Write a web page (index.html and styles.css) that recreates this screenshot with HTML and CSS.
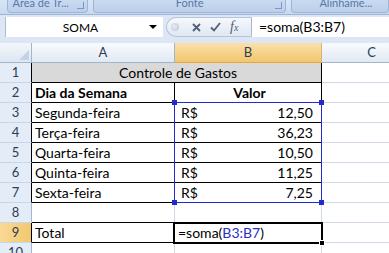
FILE: index.html
```html
<!DOCTYPE html>
<html lang="pt">
<head>
<meta charset="utf-8">
<title>Controle de Gastos</title>
<link rel="stylesheet" href="styles.css">
</head>
<body>
<div class="ribbon">
  <div class="grp g1"><span class="glabel">Área de Tr...</span><i class="launch"></i></div>
  <div class="grp g2"><span class="glabel">Fonte</span><i class="launch"></i></div>
  <div class="grp g3"><span class="glabel">Alinhame...</span></div>
</div>
<div class="fbar">
  <div class="namebox"><span class="nm">SOMA</span><span class="dd"></span></div>
  <div class="btns">
    <span class="dot"></span>
    <svg class="ico" width="9" height="9" viewBox="0 0 9 9"><path d="M1 1L8 8M8 1L1 8" stroke="#4e5f76" stroke-width="1.8" fill="none"/></svg>
    <svg class="ico" width="11" height="10" viewBox="0 0 11 10"><path d="M1 5.5L4 8.5L10 1" stroke="#4e5f76" stroke-width="1.8" fill="none"/></svg>
    <span class="fx">f<small>x</small></span>
  </div>
  <div class="formula">=soma(B3:B7)</div>
</div>
<div class="sheet">
  <div class="corner"><svg width="10" height="10" viewBox="0 0 10 10"><path d="M10 0L10 10L0 10Z" fill="#c2d2e8"/></svg></div>
  <div class="ch">A</div>
  <div class="ch sel">B</div>
  <div class="ch">C</div>

  <div class="rh bk">1</div>
  <div class="c title bb br">Controle de Gastos</div>
  <div class="c"></div>

  <div class="rh bk">2</div>
  <div class="c b bb br">Dia da Semana</div>
  <div class="c b ctr bb br">Valor</div>
  <div class="c"></div>

  <div class="rh bk">3</div>
  <div class="c bb br">Segunda-feira</div>
  <div class="c acc bb br"><span>R$</span><span>12,50</span></div>
  <div class="c"></div>

  <div class="rh bk">4</div>
  <div class="c bb br">Terça-feira</div>
  <div class="c acc bb br"><span>R$</span><span>36,23</span></div>
  <div class="c"></div>

  <div class="rh bk">5</div>
  <div class="c bb br">Quarta-feira</div>
  <div class="c acc bb br"><span>R$</span><span>10,50</span></div>
  <div class="c"></div>

  <div class="rh bk">6</div>
  <div class="c bb br">Quinta-feira</div>
  <div class="c acc bb br"><span>R$</span><span>11,25</span></div>
  <div class="c"></div>

  <div class="rh bk">7</div>
  <div class="c bb br">Sexta-feira</div>
  <div class="c acc bb br"><span>R$</span><span>7,25</span></div>
  <div class="c"></div>

  <div class="rh">8</div>
  <div class="c bb"></div>
  <div class="c bb"></div>
  <div class="c"></div>

  <div class="rh bk sel">9</div>
  <div class="c bb br">Total</div>
  <div class="c bb br">=soma(<span class="ref">B3:B7</span>)</div>
  <div class="c"></div>

  <div class="rh">10</div>
  <div class="c"></div>
  <div class="c"></div>
  <div class="c"></div>

  <div class="range"><i class="h tl"></i><i class="h tr"></i><i class="h bl"></i><i class="h brr"></i></div>
  <div class="active"><i class="fill"></i></div>
</div>
</body>
</html>
```
FILE: styles.css
```css
* { box-sizing: border-box; margin: 0; padding: 0; }
html, body { overflow: hidden; }
body {
  width: 389px;
  height: 253px;
  background: #fff;
  font-family: Lato, "Liberation Sans", sans-serif;
  color: #000;
}

/* ribbon strip */
.ribbon {
  height: 15px;
  background: linear-gradient(#d9e5f5, #c8d9ef);
  border-bottom: 1px solid #9db4d4;
  display: flex;
  gap: 5px;
  padding-left: 7px;
  overflow: hidden;
}
.grp {
  height: 13px;
  background: linear-gradient(#c9daf0, #bcd0eb);
  border: 1px solid #9cb5d8;
  border-top: none;
  border-radius: 0 0 4px 4px;
  display: flex;
  justify-content: center;
  position: relative;
  overflow: hidden;
}
.g1 { width: 83px; }
.g2 { width: 196px; }
.g3 { width: 100px; }
.glabel {
  font-size: 11px;
  line-height: 11px;
  margin-top: -3px;
  color: #5877a8;
  white-space: nowrap;
}
.g1 .glabel { margin-right: 14px; }
.g3 .glabel { margin-left: 12px; }
.launch {
  position: absolute;
  right: 3px;
  top: 2px;
  width: 7px;
  height: 7px;
  border-right: 1px solid #7d97bf;
  border-bottom: 1px solid #7d97bf;
}

/* formula bar */
.fbar {
  height: 28px;
  background: #dce6f4;
  display: flex;
  padding: 2px 0 6px 5px;
}
.namebox {
  width: 158px;
  background: #fff;
  border-left: 1px solid #a9bcd5;
  display: flex;
  align-items: center;
}
.nm {
  flex: 1;
  text-align: center;
  font-size: 12px;
  padding-left: 6px;
}
.dd {
  width: 0;
  height: 0;
  border-left: 4px solid transparent;
  border-right: 4px solid transparent;
  border-top: 4px solid #000;
  margin-right: 6px;
}
.btns {
  width: 86px;
  margin-left: 3px;
  background: linear-gradient(#f6f8fc, #dfe7f2);
  border: 1px solid #b4c4da;
  border-right: 1px solid #a7b8cf;
  border-radius: 10px 0 0 10px;
  display: flex;
  align-items: center;
  padding-left: 4px;
  gap: 9px;
}
.dot {
  width: 8px;
  height: 8px;
  border-radius: 50%;
  background: radial-gradient(circle at 40% 40%, #e8edf3, #b9c3cf);
  margin-right: 4px;
}
.fx {
  font-family: "Liberation Serif", serif;
  font-style: italic;
  font-size: 14px;
  color: #4e5f76;
  line-height: 1;
}
.fx small { font-size: 10px; }
.formula {
  flex: 1;
  background: #fff;
  font-size: 14px;
  line-height: 20px;
  padding-left: 7px;
  white-space: nowrap;
}

/* sheet grid */
.sheet {
  display: grid;
  grid-template-columns: 32px 143px 147px 100px;
  grid-template-rows: repeat(11, 20px);
  width: 422px;
  position: relative;
}
.corner {
  background: linear-gradient(#f4f7fb, #dde6f2);
  border-right: 1px solid #9eb6ce;
  border-bottom: 1px solid #9eb6ce;
  display: flex;
  justify-content: flex-end;
  align-items: flex-end;
  padding: 0 2px 2px 0;
}
.ch {
  background: linear-gradient(#f8fafd, #e2e9f4);
  border-right: 1px solid #9eb6ce;
  border-bottom: 1px solid #9eb6ce;
  font-size: 13px;
  line-height: 19px;
  text-align: center;
  color: #2c3d55;
}
.ch.sel {
  background: linear-gradient(#fae0ad, #f2c66b);
  border-bottom-color: #e5a83d;
  border-right-color: #d9b46e;
}
.rh {
  background: #e4ecf7;
  border-right: 1px solid #9eb6ce;
  border-bottom: 1px solid #c9d6e8;
  font-size: 13px;
  line-height: 19px;
  text-align: center;
  color: #2c3d55;
  overflow: hidden;
}
.rh.bk { border-right-color: #000; }
.rh.sel { background: linear-gradient(90deg, #f9d996, #f3c86e); }
.c {
  border-right: 1px solid #d0d7e5;
  border-bottom: 1px solid #d0d7e5;
  font-size: 14px;
  line-height: 19px;
  padding-left: 3px;
  white-space: nowrap;
  overflow: hidden;
}
.c.bb { border-bottom-color: #000; }
.c.br { border-right-color: #000; }
.title {
  grid-column: span 2;
  background: #d9d9d9;
  text-align: center;
}
.b { font-weight: bold; }
.ctr { text-align: center; }
.acc {
  display: flex;
  justify-content: space-between;
  padding: 0 8px 0 6px;
}
.ref { color: #2d2dc4; }

/* reference range highlight (overlay on B3:B7) */
.range {
  position: absolute;
  grid-column: 3 / 4;
  grid-row: 4 / 9;
  top: -1px;
  left: -1px;
  right: 0;
  bottom: 0;
  border: 1px solid #1f2ad0;
}
.h {
  position: absolute;
  width: 5px;
  height: 5px;
  background: #1f2ad0;
}
.tl { left: -3px; top: -3px; }
.tr { right: -3px; top: -3px; }
.bl { left: -3px; bottom: -3px; }
.brr { right: -3px; bottom: -3px; }

/* active cell (overlay on B9) */
.active {
  position: absolute;
  grid-column: 3 / 4;
  grid-row: 10 / 11;
  top: -1px;
  left: -2px;
  right: -1px;
  bottom: -1px;
  border: 2px solid #000;
}
.fill {
  position: absolute;
  right: -4px;
  bottom: -4px;
  width: 6px;
  height: 6px;
  background: #000;
  border: 1px solid #fff;
}
```
